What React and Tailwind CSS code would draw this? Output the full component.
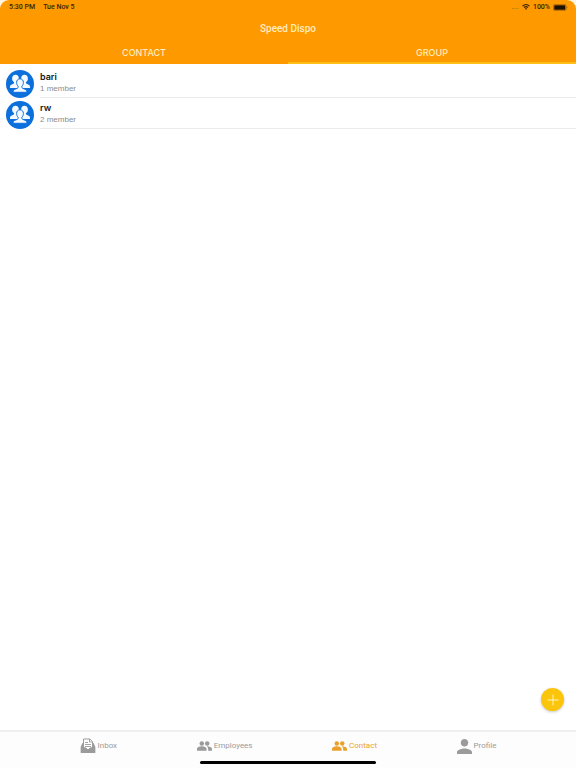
const groups = [
  { name: "bari", members: 1 },
  { name: "rw", members: 2 },
];

function WifiIcon() {
  return (
    <svg viewBox="0 0 24 18" className="h-[6px] w-2" fill="none" stroke="currentColor" strokeWidth="3.4" aria-hidden="true">
      <path d="M1.5 6.500C7.500 .5 16.500 .5 22.500 6.500" />
      <path d="M6 11C9.500 7.500 14.500 7.500 18 11" />
      <path d="M12 17.500L8.500 14C10.500 12.200 13.500 12.200 15.500 14Z" fill="currentColor" stroke="none" />
    </svg>
  );
}

function BatteryIcon() {
  return (
    <svg viewBox="0 0 15 7" className="h-[7px] w-[15px]" aria-hidden="true">
      <rect x=".4" y=".4" width="12.700" height="6.200" rx="1.600" fill="none" stroke="#2b1a00" strokeOpacity=".45" strokeWidth=".7" />
      <rect x="1.200" y="1.200" width="11.100" height="4.600" rx=".9" fill="#1d1200" />
      <path d="M13.800 2.400v2.200c.9-.3.9-1.900 0-2.200Z" fill="#2b1a00" fillOpacity=".5" />
    </svg>
  );
}

function GroupAvatar() {
  return (
    <svg viewBox="0 0 28 28" className="size-7 shrink-0" aria-hidden="true">
      <circle cx="14" cy="14" r="14" fill="#0b6fdc" />
      <g fill="#f2f9ff">
        <path d="M9.500 4.700c2.100 0 3.400 1.500 3.400 3.700 0 1.600-.6 2.900-1.500 3.600v1.300l3 1.700v3H4c0-1.200 0-2 .5-2.700.7-1 3-1.200 3.500-2v-1.300c-1.200-.7-1.900-2-1.900-3.600 0-2.200 1.300-3.700 3.400-3.700Z" />
        <path d="M18.500 4.700c-2.100 0-3.400 1.500-3.400 3.700 0 1.600.6 2.900 1.500 3.600v1.300l-3 1.700v3H24c0-1.200 0-2-.5-2.700-.7-1-3-1.200-3.500-2v-1.300c1.200-.7 1.900-2 1.900-3.600 0-2.200-1.300-3.700-3.400-3.700Z" />
      </g>
      <path
        d="M14 8.800c2.100 0 3.400 1.500 3.400 3.700 0 1.600-.6 2.900-1.500 3.600v1.500c.5 1.100 3.800 1.500 4.500 2.700.4.700.5 1.300.5 2H7.100c0-.7.1-1.300.5-2 .7-1.200 4-1.600 4.500-2.700v-1.500c-.9-.7-1.500-2-1.500-3.600 0-2.200 1.300-3.700 3.400-3.700Z"
        fill="#f2f9ff"
        stroke="#0b6fdc"
        strokeWidth="1"
      />
    </svg>
  );
}

function InboxIcon() {
  return (
    <svg viewBox="0 0 16 16" className="size-4" aria-hidden="true">
      <path d="M2.500 5 .8 8.500V15h14.400V8.500L13.500 5Z" fill="#9b9b9b" />
      <path d="M3.500 1h6.300l2.700 2.700V10H10l-1 1.500H7L6 10H3.500Z" fill="#fff" stroke="#9b9b9b" />
      <path d="M9.500 1v3h3" fill="none" stroke="#9b9b9b" strokeWidth=".9" />
      <path d="M5 4.500h3M5 6.500h6M5 8.500h6" fill="none" stroke="#9b9b9b" strokeWidth=".9" />
      <path d="M.8 9.500h4.700l1 2h3l1-2h4.700V15H.8Z" fill="#9b9b9b" />
    </svg>
  );
}

function PeopleIcon() {
  return (
    <svg viewBox="1 4.500 22 14.700" className="h-[10px] w-[15px]" fill="currentColor" aria-hidden="true">
      <circle cx="8" cy="8" r="3.300" />
      <circle cx="16" cy="8" r="3.300" />
      <path d="M8 12.300c-2.600 0-7 1.200-7 4V19h14v-2.700c0-2.800-4.400-4-7-4Z" />
      <path d="M15.200 12.300c1.300 1 2.200 2.300 2.200 4V19H23v-2.700c0-2.800-4.500-4.100-7.800-4Z" />
    </svg>
  );
}

function PersonIcon() {
  return (
    <svg viewBox="4 4 16 16" className="h-[15px] w-[15px]" fill="currentColor" aria-hidden="true">
      <path d="M12 12c2.210 0 4-1.790 4-4s-1.790-4-4-4-4 1.790-4 4 1.790 4 4 4zm0 2c-2.670 0-8 1.340-8 4v2h16v-2c0-2.660-5.330-4-8-4z" />
    </svg>
  );
}

const destinations = [
  { label: "Inbox", Icon: InboxIcon },
  { label: "Employees", Icon: PeopleIcon },
  { label: "Contact", Icon: PeopleIcon, active: true },
  { label: "Profile", Icon: PersonIcon },
];

export default function App() {
  return (
    <div className="bg-[#fff5df] font-['Inter','Liberation_Sans',sans-serif]">
      <div className="relative flex min-h-screen flex-col overflow-hidden rounded-t-[9px] bg-white">
        <header className="bg-[#ff9900]">
          <div className="flex h-[14px] items-center justify-between pr-2 pl-[9px] font-['Roboto',sans-serif] text-[7px] font-medium text-[#3a2300]">
            <div className="flex gap-2">
              <span>5:30 PM</span>
              <span>Tue Nov 5</span>
            </div>
            <div className="flex items-center gap-[3px]">
              <span className="text-[#a86400]">....</span>
              <WifiIcon />
              <span>100%</span>
              <BatteryIcon />
            </div>
          </div>
          <h1 className="flex h-7 items-center justify-center font-['Roboto',sans-serif] text-[10px] font-medium text-[#ffedbd]">Speed Dispo</h1>
          <div role="tablist" className="grid h-[22px] grid-cols-2 text-[9px] font-medium text-[#ffedbd]">
            <button role="tab" aria-selected="false" className="border-b-2 border-transparent pt-[2px]">CONTACT</button>
            <button role="tab" aria-selected="true" className="border-b-2 border-[#ffbf16] pt-[2px]">GROUP</button>
          </div>
        </header>

        <main className="flex-1 pt-[3px]">
          <ul>
            {groups.map((group) => (
              <li key={group.name} className="flex h-[31px] gap-[6px] pl-[6px]">
                <div className="pt-[3px]">
                  <GroupAvatar />
                </div>
                <div className="flex-1 border-b border-[#ececec] pt-1">
                  <h2 className="text-[9px] leading-3 font-semibold text-[#161616]">{group.name}</h2>
                  <p className="font-['Liberation_Sans',sans-serif] text-[8px] leading-3 text-[#8c8c8c]">{group.members} member</p>
                </div>
              </li>
            ))}
          </ul>
        </main>

        <button
          aria-label="Add group"
          className="absolute right-3 bottom-[57px] flex size-[23px] items-center justify-center rounded-full bg-[#fbc50c] shadow-[0_1px_3px_rgba(0,0,0,0.22)]"
        >
          <svg viewBox="0 0 12 12" className="size-3" stroke="#fff2bd" strokeWidth="1" aria-hidden="true">
            <path d="M6 .5v11M.5 6h11" />
          </svg>
        </button>

        <nav className="flex h-[38px] flex-col items-center justify-between border-t-2 border-[#efefef] bg-[#fefdfe] pb-1">
          <div className="flex w-full justify-evenly">
            {destinations.map(({ label, Icon, active }) => (
              <a
                key={label}
                href="#"
                aria-current={active ? "page" : undefined}
                className={`flex h-7 items-center gap-[2px] font-['Roboto',sans-serif] text-[8px] ${active ? "text-[#eba02c]" : "text-[#9b9b9b]"}`}
              >
                <Icon />
                <span>{label}</span>
              </a>
            ))}
          </div>
          <div className="h-[3px] w-44 shrink-0 rounded-full bg-black" />
        </nav>
      </div>
    </div>
  );
}
